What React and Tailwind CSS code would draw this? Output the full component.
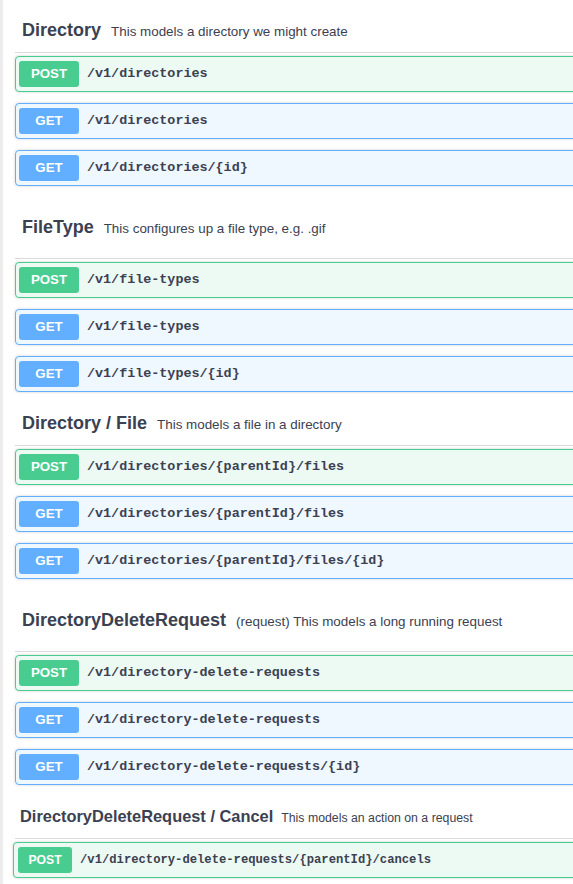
import React from 'react';

const sections = [
    {
        name: 'Directory',
        desc: 'This models a directory we might create',
        ops: [
            ['POST', '/v1/directories'],
            ['GET', '/v1/directories'],
            ['GET', '/v1/directories/{id}'],
        ],
    },
    {
        name: 'FileType',
        desc: 'This configures up a file type, e.g. .gif',
        tall: true,
        ops: [
            ['POST', '/v1/file-types'],
            ['GET', '/v1/file-types'],
            ['GET', '/v1/file-types/{id}'],
        ],
    },
    {
        name: 'Directory / File',
        desc: 'This models a file in a directory',
        ops: [
            ['POST', '/v1/directories/{parentId}/files'],
            ['GET', '/v1/directories/{parentId}/files'],
            ['GET', '/v1/directories/{parentId}/files/{id}'],
        ],
    },
    {
        name: 'DirectoryDeleteRequest',
        desc: '(request) This models a long running request',
        tall: true,
        ops: [
            ['POST', '/v1/directory-delete-requests'],
            ['GET', '/v1/directory-delete-requests'],
            ['GET', '/v1/directory-delete-requests/{id}'],
        ],
    },
    {
        name: 'DirectoryDeleteRequest / Cancel',
        desc: 'This models an action on a request',
        small: true,
        ops: [['POST', '/v1/directory-delete-requests/{parentId}/cancels']],
    },
];

function Operation({ method, path, small }) {
    const isPost = method === 'POST';
    return (
        <div
            className={`flex items-center h-[36px] mt-[3px] mb-[11px] border rounded-[4px] shadow-[0_0_3px_rgba(0,0,0,0.19)] ${
                isPost ? 'border-[#49cc90] bg-[#edfaf4]' : 'border-[#61affe] bg-[#eff7ff]'
            } ${small ? 'pl-[4px] -ml-[2px]' : 'pl-[3px]'}`}
        >
            <span
                className={`flex items-center justify-center h-[26px] rounded-[3px] text-white font-bold ${
                    isPost ? 'bg-[#49cc90]' : 'bg-[#61affe]'
                } ${small ? 'w-[54px] text-[12.2px]' : 'w-[60px] text-[13.3px]'}`}
                style={{ fontFamily: '"Liberation Sans", Arial, sans-serif' }}
            >
                {method}
            </span>
            <span
                className={`font-bold text-[#3b4151] ${small ? 'ml-[8px] text-[12.2px]' : 'ml-[8px] text-[13.4px]'}`}
                style={{ fontFamily: '"Liberation Mono", "Courier New", monospace' }}
            >
                {path}
            </span>
        </div>
    );
}

function Section({ section }) {
    const { name, desc, tall, small, ops } = section;
    return (
        <div>
            <div
                className={`flex items-baseline border-b border-[#dadada] ${
                    tall ? 'pt-[18px] pb-[19px]' : 'pt-[8px] pb-[10px]'
                } ${small ? 'pl-[5px]' : 'pl-[7px]'}`}
            >
                <span className={`font-bold text-[#3b4151] leading-[24px] ${small ? 'text-[16.4px]' : 'text-[18px]'}`}>
                    {name}
                </span>
                <span className={`text-[#3b4151] ${small ? 'ml-[8px] text-[12.3px]' : 'ml-[10px] text-[13.4px]'}`}>
                    {desc}
                </span>
            </div>
            {ops.map(([m, p], i) => (
                <Operation key={i} method={m} path={p} small={small} />
            ))}
        </div>
    );
}

export default function App() {
    return (
        <div
            className="flex min-h-screen bg-white overflow-hidden"
            style={{ fontFamily: '"Liberation Sans", Arial, sans-serif' }}
        >
            <div className="w-[3px] shrink-0 bg-[#ececec]" />
            <div className="flex-1 pl-[12px] pt-[10px] -mr-[20px]">
                {sections.map((s, i) => (
                    <Section key={i} section={s} />
                ))}
            </div>
        </div>
    );
}
